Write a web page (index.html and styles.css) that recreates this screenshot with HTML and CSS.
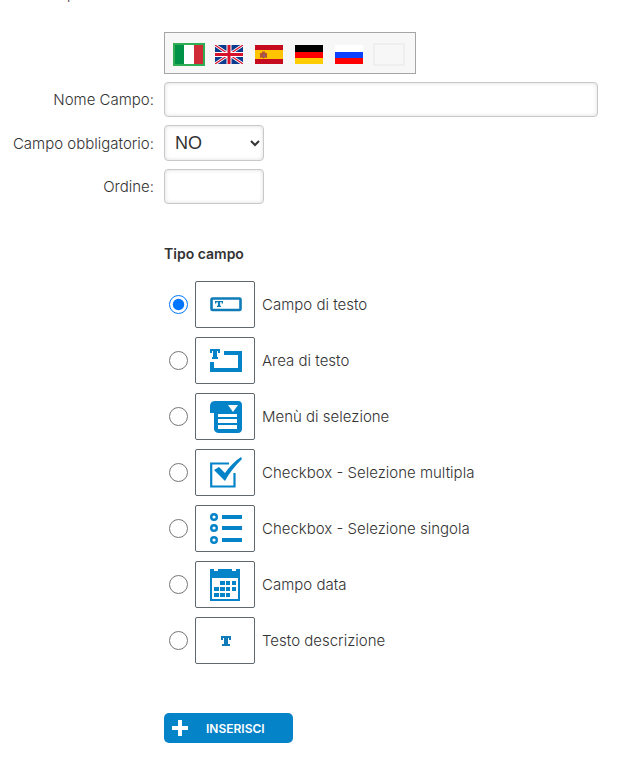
FILE: index.html
```html
<!DOCTYPE html>
<html lang="it">
<head>
<meta charset="utf-8">
<meta name="viewport" content="width=device-width, initial-scale=1">
<title>Nuovo campo</title>
<link rel="stylesheet" href="styles.css">
</head>
<body>
<div class="cut-line">p</div>
<form class="form">
  <div class="languages">
    <button type="button" class="flag selected" aria-label="Italiano">
      <svg viewBox="0 0 28 19"><path fill="#009246" d="M0 0h10v19H0z"/><path fill="#fff" d="M9 0h10v19H9z"/><path fill="#ce2b37" d="M19 0h9v19h-9z"/></svg>
    </button>
    <button type="button" class="flag" aria-label="English">
      <svg viewBox="0 0 28 19"><path fill="#0b3b8f" d="M0 0h28v19H0z"/><path stroke="#fff" stroke-width="3" d="M0 0l28 19M28 0L0 19"/><path stroke="#d8122d" stroke-width="1.2" d="M0 0l28 19M28 0L0 19"/><path stroke="#fff" stroke-width="5" d="M14 0v19M0 9.5h28"/><path stroke="#d8122d" stroke-width="3" d="M14 0v19M0 9.5h28"/></svg>
    </button>
    <button type="button" class="flag" aria-label="Español">
      <svg viewBox="0 0 28 19"><path fill="#c60b1e" d="M0 0h28v19H0z"/><path fill="#ffc400" d="M0 5h28v9H0z"/><path fill="#b5542b" d="M5 8h1v5H5zM11 8h1v5h-1zM7 6.500h3V8h1v4l-2.500 1.500L6 12V8h1z"/><path fill="#8c5a80" d="M8 9h2v3H8z"/></svg>
    </button>
    <button type="button" class="flag" aria-label="Deutsch">
      <svg viewBox="0 0 28 19"><path d="M0 0h28v7H0z"/><path fill="#f00" d="M0 7h28v6H0z"/><path fill="#fc0" d="M0 13h28v6H0z"/></svg>
    </button>
    <button type="button" class="flag" aria-label="Русский">
      <svg viewBox="0 0 28 19"><path fill="#fff" d="M0 0h28v7H0z"/><path fill="#0b41ff" d="M0 7h28v6H0z"/><path fill="#f00" d="M0 13h28v6H0z"/></svg>
    </button>
    <button type="button" class="flag empty" aria-label="Altra lingua"></button>
  </div>

  <label class="name" for="nome">Nome Campo:</label>
  <input class="field" id="nome" type="text">

  <label class="name" for="obbligatorio">Campo obbligatorio:</label>
  <select class="field short" id="obbligatorio"><option>NO</option><option>SI</option></select>

  <label class="name" for="ordine">Ordine:</label>
  <input class="field short" id="ordine" type="text">

  <fieldset class="types">
    <legend class="title">Tipo campo</legend>
    <label class="option">
      <input type="radio" name="tipo" checked>
      <span class="tile"><svg viewBox="0 0 32 32"><rect x="1.500" y="9.500" width="29" height="11.500" rx="1" fill="none" stroke="#0f7bb8" stroke-width="2.600"/><path fill="#0f7bb8" d="M5 12h8v2.500h-1.300V13.300h-1.600v3.500H11V18H7v-1.200h.9v-3.500H6.300v1.200H5z"/></svg></span>
      Campo di testo
    </label>
    <label class="option">
      <input type="radio" name="tipo">
      <span class="tile"><svg viewBox="0 0 32 32"><path fill="#0583c9" d="M0 4h10v4H8V6H7v6h1v2H2v-2h1V6H2v2H0zM14 6h18v21H0V17h4v6h24V10H14z"/></svg></span>
      Area di testo
    </label>
    <label class="option">
      <input type="radio" name="tipo">
      <span class="tile"><svg viewBox="0 0 32 32"><path fill="#0583c9" d="M5 0h23c3 0 4 2 4 4v24c0 2-1.500 4-4 4H9c-3 0-5-2-5-4V12H0V6c0-3 1-6 5-6z"/><path fill="#fff" d="M18 4h10l-5 7zM8 13h19v3H8zM8 18h19v4H8zM8 24h19v4H8z"/></svg></span>
      Menù di selezione
    </label>
    <label class="option">
      <input type="radio" name="tipo">
      <span class="tile"><svg viewBox="0 0 32 32"><path fill="none" stroke="#0583c9" stroke-width="2.200" d="M19 6.500H1.200v23h23.300V16"/><path fill="#0583c9" d="M4 13l5-3 6 6C19 10 25 4 31 0l1 2C25 9 19 16 15 24z"/></svg></span>
      Checkbox - Selezione multipla
    </label>
    <label class="option">
      <input type="radio" name="tipo">
      <span class="tile"><svg viewBox="0 0 32 32"><g fill="none" stroke="#0583c9" stroke-width="2.400"><circle cx="4" cy="4" r="2.800"/><circle cx="4" cy="15" r="2.800"/><circle cx="4" cy="27" r="2.800"/></g><path fill="#0583c9" d="M12 2h20v4H12zM12 13h20v4H12zM12 25h20v4H12z"/></svg></span>
      Checkbox - Selezione singola
    </label>
    <label class="option">
      <input type="radio" name="tipo">
      <span class="tile"><svg viewBox="0 0 32 32"><path fill="#0583c9" d="M0 0h4v2h4V0h14v2h4V0h4v32H0z"/><path fill="#fff" d="M2 9h26v21H2z"/><path fill="#0583c9" d="M10 12h5v4h-5zM16 12h4v4h-4zM22 12h4v4h-4zM4 18h5v4H4zM10 18h5v4h-5zM16 18h4v4h-4zM22 18h4v4h-4zM4 24h5v4H4zM10 24h5v4h-5zM16 24h4v4h-4z"/></svg></span>
      Campo data
    </label>
    <label class="option">
      <input type="radio" name="tipo">
      <span class="tile"><svg viewBox="0 0 32 32"><path fill="#0f7bb8" d="M11 11h10v4h-2v-2h-1v6h2v2h-8v-2h2v-6h-1v2h-2z"/></svg></span>
      Testo descrizione
    </label>
  </fieldset>

  <button type="submit" class="submit">
    <svg viewBox="0 0 16 16"><path fill="#fff" d="M6 0h4v6h6v4h-6v6H6v-6H0V6h6z"/></svg>
    INSERISCI
  </button>
</form>
</body>
</html>
```
FILE: styles.css
```css
* {
  box-sizing: border-box;
}

body {
  margin: 0;
  background: #fff;
  color: #333;
  font-family: "Century Gothic", Inter, sans-serif;
  font-size: 15px;
  font-weight: 300;
}

.cut-line {
  display: flex;
  align-items: flex-end;
  height: 2px;
  padding-left: 67px;
  overflow: hidden;
  font-size: 14px;
  line-height: 14px;
}

.form {
  display: grid;
  grid-template-columns: 154px 1fr;
  gap: 8px 10px;
  align-items: center;
  padding: 30px 43px 20px 0;
}

.languages {
  grid-column: 2;
  justify-self: start;
  display: flex;
  gap: 8px;
  padding: 10px 10px 7px 8px;
  border: 1px solid #a5a5a5;
  background: #f7f7f7;
}

.flag {
  display: block;
  width: 32px;
  height: 23px;
  padding: 0;
  border: 2px solid transparent;
  background: none;
}

.flag svg {
  display: block;
  width: 28px;
  height: 19px;
}

.flag.selected {
  border-color: #2fae55;
}

.flag.empty {
  border-color: #efefef;
}

.name {
  text-align: right;
  white-space: nowrap;
}

.field {
  width: 100%;
  height: 35px;
  padding: 0 6px;
  border: 1px solid #c8c8c8;
  border-radius: 4px;
  background: #fff;
  box-shadow: inset 0 0 4px #ddd;
  color: #333;
  font-family: "Liberation Sans", Arial, sans-serif;
  font-size: 18px;
}

.field.short {
  width: 100px;
}

select.field {
  height: 36px;
}

.types {
  grid-column: 2;
  display: flex;
  flex-direction: column;
  gap: 9px;
  margin: 32px 0 0;
  padding: 0;
  border: 0;
}

.title {
  margin-bottom: 18px;
  padding: 0;
  font-size: 14px;
  font-weight: 600;
  line-height: 19px;
}

.option {
  display: flex;
  align-items: center;
}

.option input {
  width: 19px;
  height: 19px;
  margin: 0 7px 0 5px;
}

.tile {
  display: flex;
  align-items: center;
  justify-content: center;
  width: 60px;
  height: 47px;
  margin-right: 7px;
  padding-left: 2px;
  border: 1px solid #5f686e;
  border-radius: 2px;
}

.tile svg {
  width: 32px;
  height: 32px;
}

.submit {
  grid-column: 2;
  justify-self: start;
  display: flex;
  align-items: center;
  gap: 18px;
  width: 129px;
  height: 30px;
  margin-top: 41px;
  padding: 0 8px;
  border: 0;
  border-radius: 5px;
  background: #0583c9;
  color: #fff;
  font-family: inherit;
  font-size: 12px;
  font-weight: 600;
}

.submit svg {
  width: 16px;
  height: 16px;
}
```
